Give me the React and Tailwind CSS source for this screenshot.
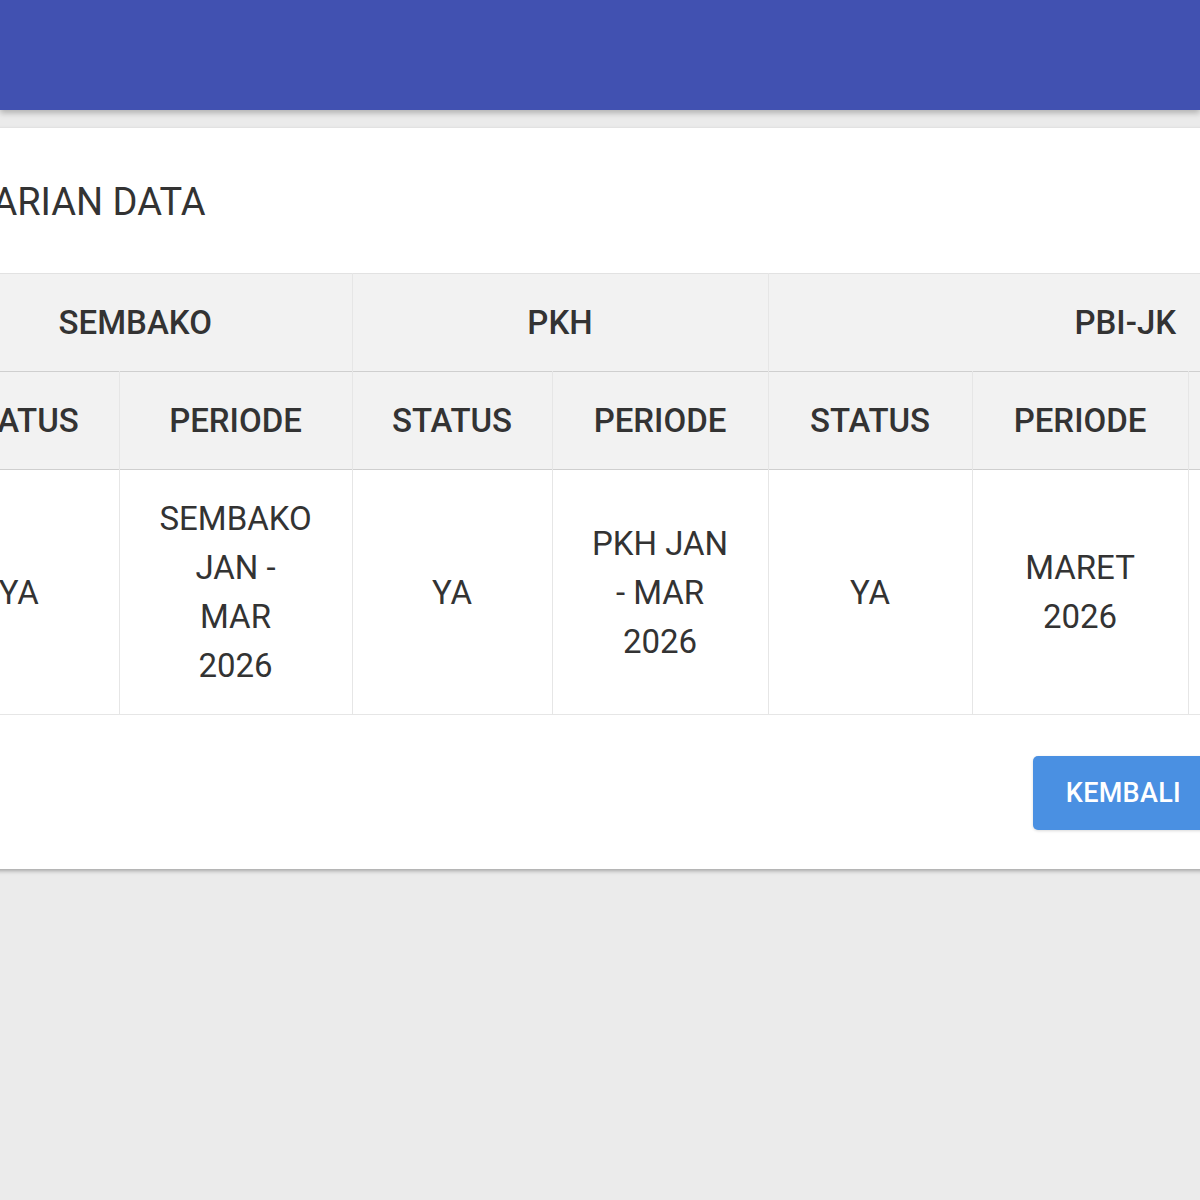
export default function App() {
  const font = { fontFamily: "Roboto, 'Liberation Sans', Arial, sans-serif" };
  return (
    <div className="w-[1200px] h-[1200px] overflow-hidden bg-[#ebebeb] text-[#333333]" style={font}>
      {/* Barra superior */}
      <div className="h-[110px] bg-[#4151b1] shadow-[0_3px_6px_rgba(0,0,0,0.25)] relative z-10" />

      {/* Kartu hasil pencarian */}
      <div className="mt-[18px] -ml-[150px] w-[1404px] bg-white shadow-[0_2px_4px_rgba(0,0,0,0.3)] pt-[52px] pb-[39px]">
        <h2 className="pl-[45px] text-[38px] leading-[44px] font-normal">PENCARIAN DATA</h2>

        <div className="mt-[49px] ml-[69px] overflow-hidden">
          <table className="table-fixed border-collapse text-[33px] leading-[49px] text-center w-[1563px]">
            <colgroup>
              <col className="w-[200px]" />
              <col className="w-[233px]" />
              <col className="w-[200px]" />
              <col className="w-[216px]" />
              <col className="w-[204px]" />
              <col className="w-[216px]" />
              <col className="w-[294px]" />
            </colgroup>
            <thead className="bg-[#f2f2f2]">
              <tr className="border-t border-[#e2e2e2] border-b border-b-[#cfcfcf]">
                <th colSpan={2} className="font-medium py-[24px] border-r border-[#e6e6e6]">SEMBAKO</th>
                <th colSpan={2} className="font-medium py-[24px] border-r border-[#e6e6e6]">PKH</th>
                <th colSpan={3} className="font-medium py-[24px]">PBI-JK</th>
              </tr>
              <tr className="border-b border-b-[#cfcfcf]">
                <th className="font-medium py-[24px] border-r border-[#e6e6e6]">STATUS</th>
                <th className="font-medium py-[24px] border-r border-[#e6e6e6]">PERIODE</th>
                <th className="font-medium py-[24px] border-r border-[#e6e6e6]">STATUS</th>
                <th className="font-medium py-[24px] border-r border-[#e6e6e6]">PERIODE</th>
                <th className="font-medium py-[24px] border-r border-[#e6e6e6]">STATUS</th>
                <th className="font-medium py-[24px] border-r border-[#e6e6e6]">PERIODE</th>
                <th className="font-medium py-[24px]">KET</th>
              </tr>
            </thead>
            <tbody>
              <tr className="border-b border-[#e6e6e6]">
                <td className="py-[24px] px-[36px] border-r border-[#e6e6e6]">YA</td>
                <td className="py-[24px] px-[40px] border-r border-[#e6e6e6]">SEMBAKO JAN - MAR 2026</td>
                <td className="py-[24px] px-[36px] border-r border-[#e6e6e6]">YA</td>
                <td className="py-[24px] px-[34px] border-r border-[#e6e6e6]">PKH JAN - MAR 2026</td>
                <td className="py-[24px] px-[36px] border-r border-[#e6e6e6]">YA</td>
                <td className="py-[24px] px-[36px] border-r border-[#e6e6e6]">MARET 2026</td>
                <td className="py-[24px] px-[36px]">-</td>
              </tr>
            </tbody>
          </table>
        </div>

        <div className="mt-[41px] flex justify-end pr-[40px]">
          <button className="h-[74px] px-[33px] rounded-[5px] bg-[#4a90e2] text-white text-[27px] font-medium tracking-[0.3px] shadow-[0_1px_3px_rgba(0,0,0,0.15)]">
            KEMBALI
          </button>
        </div>
      </div>
    </div>
  );
}
